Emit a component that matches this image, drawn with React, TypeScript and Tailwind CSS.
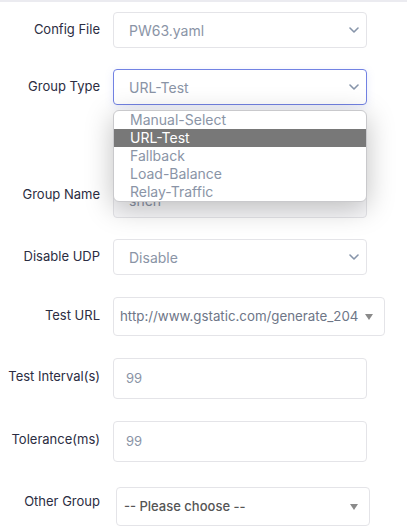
import React from "react";

const font = { fontFamily: "Inter, 'Open Sans', sans-serif" };

function Chevron() {
  return (
    <svg width="10" height="6" viewBox="0 0 10 6" className="shrink-0">
      <path d="M1 1l4 4 4-4" fill="none" stroke="#8795aa" strokeWidth="1.6" strokeLinecap="round" strokeLinejoin="round" />
    </svg>
  );
}

function Tri() {
  return (
    <svg width="8" height="6" viewBox="0 0 8 6" className="shrink-0">
      <path d="M0 0h8L4 6z" fill="#8a8a8a" />
    </svg>
  );
}

function Row({
  label,
  children,
  className = "",
  labelClass = "",
}: {
  label: string;
  children: React.ReactNode;
  className?: string;
  labelClass?: string;
}) {
  return (
    <div className={`flex items-center ${className}`}>
      <div className={`w-[100px] shrink-0 text-right text-[13px] text-[#2b2d42] ${labelClass}`}>{label}</div>
      {children}
    </div>
  );
}

export default function App() {
  const options = ["Manual-Select", "URL-Test", "Fallback", "Load-Balance", "Relay-Traffic"];
  return (
    <div className="relative h-[529px] w-[407px] overflow-hidden bg-white" style={font}>
      <div className="h-[2px] bg-[#ebebf0]" />

      <Row label="Config File" className="mt-[10px]">
        <div className="ml-[13px] flex h-[36px] w-[254px] items-center justify-between rounded-[4px] border border-[#e4e4e8] pl-[15px] pr-[7px] text-[14px] text-[#8a94a6]">
          <span>PW63.yaml</span>
          <Chevron />
        </div>
      </Row>

      <Row label="Group Type" className="mt-[21px]">
        <div className="ml-[13px] flex h-[36px] w-[254px] items-center justify-between rounded-[4px] border border-[#7282e3] pl-[15px] pr-[7px] text-[14px] text-[#8a94a6] shadow-[0_2px_8px_rgba(109,125,226,0.15)]">
          <span>URL-Test</span>
          <Chevron />
        </div>
      </Row>

      <Row label="Group Name" className="mt-[77px]" labelClass="mb-[10px]">
        <div className="ml-[13px] flex h-[36px] w-[254px] items-center rounded-[4px] border border-[#e4e4e8] bg-[#f8f8fa] pl-[15px] text-[14px] text-[#8a94a6]">
          shen
        </div>
      </Row>

      <Row label="Disable UDP" className="mt-[21px]">
        <div className="ml-[13px] flex h-[36px] w-[254px] items-center justify-between rounded-[4px] border border-[#e4e4e8] pl-[15px] pr-[7px] text-[14px] text-[#8a94a6]">
          <span>Disable</span>
          <Chevron />
        </div>
      </Row>

      <Row label="Test URL" className="mt-[22px]" labelClass="mb-[2px]">
        <div className="ml-[13px] flex h-[39px] w-[272px] items-center justify-between rounded-[4px] border border-[#e4e4e8] pl-[6px] pr-[11px] text-[13.3px] text-[#6e7687]">
          <span>http://www.gstatic.com/generate_204</span>
          <Tri />
        </div>
      </Row>

      <Row label="Test Interval(s)" className="mt-[22px]" labelClass="mb-[3px]">
        <div className="ml-[13px] flex h-[41px] w-[254px] items-center rounded-[4px] border border-[#e4e4e8] pl-[12px] text-[13px] text-[#8a94a6]">
          99
        </div>
      </Row>

      <Row label="Tolerance(ms)" className="mt-[22px]" labelClass="mb-[4px]">
        <div className="ml-[13px] flex h-[41px] w-[254px] items-center rounded-[4px] border border-[#e4e4e8] pl-[12px] text-[13px] text-[#8a94a6]">
          99
        </div>
      </Row>

      <Row label="Other Group" className="mt-[25px]" labelClass="mb-[9px]">
        <div className="ml-[16px] flex h-[39px] w-[254px] items-center justify-between rounded-[4px] border border-[#e4e4e8] pl-[7px] pr-[11px] text-[13px] font-medium text-[#555]">
          <span>-- Please choose --</span>
          <Tri />
        </div>
      </Row>

      <ul className="absolute left-[113px] top-[110px] w-[254px] overflow-hidden rounded-[6px] border border-[#c9c9cc] bg-white text-[14px] leading-[18px] shadow-[0_6px_28px_rgba(0,0,0,0.25)]">
        {options.map((o) => (
          <li
            key={o}
            className={`h-[18px] pl-[16px] ${o === "URL-Test" ? "bg-[#787878] text-white" : "text-[#8a94a6]"}`}
          >
            {o}
          </li>
        ))}
      </ul>
    </div>
  );
}
